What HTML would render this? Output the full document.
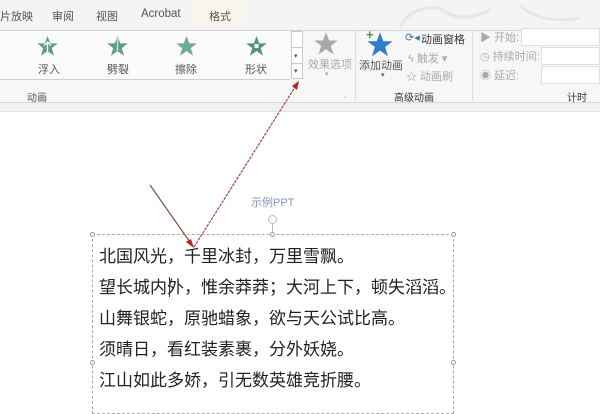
<!DOCTYPE html>
<html><head><meta charset="utf-8"><style>
*{margin:0;padding:0;box-sizing:border-box}
body{width:600px;height:400px;overflow:hidden;background:#fff;font-family:"Liberation Sans","Noto Sans CJK SC",sans-serif;position:relative;color:#444}
.a{position:absolute;white-space:nowrap}
.s{font-size:11px;color:#555}
.g{color:#aaa}
.t{font-size:17px;color:#222;letter-spacing:0}
</style></head><body>
<!-- tab bar -->
<div class="a" style="left:0;top:0;width:600px;height:30px;background:#f4f4f4"></div>
<div class="a" style="left:195px;top:0;width:50px;height:26px;background:#faf5ea"></div>
<svg class="a" style="left:380px;top:0" width="220" height="30"><path d="M20 28 Q30 5 60 8 Q80 25 110 10 M140 5 Q160 25 200 18" stroke="#e6e6e6" stroke-width="3" fill="none"/></svg>
<div class="a s" style="left:0;top:8px">片放映</div>
<div class="a s" style="left:52px;top:8px">审阅</div>
<div class="a s" style="left:96px;top:8px">视图</div>
<div class="a s" style="left:141px;top:8px;font-size:11.5px">Acrobat</div>
<div class="a s" style="left:209px;top:8px">格式</div>
<!-- ribbon -->
<div class="a" style="left:0;top:30px;width:600px;height:73px;background:#f7f7f7;border-top:1px solid #d4d4d4;border-bottom:1px solid #d8d8d8"></div>
<div class="a" style="left:0;top:31px;width:290px;height:49px;background:#fbfbfb;border-bottom:1px solid #cfcfcf"></div>
<div class="a" style="left:0;top:103px;width:600px;height:9px;background:#f1f1f1;border-bottom:1px solid #e4e4e4"></div>
<svg width="0" height="0" style="position:absolute"><defs><symbol id="st" viewBox="0 0 20 20"><polygon points="10,1 12.4,7.3 19,7.3 13.7,11.4 15.7,18 10,14 4.3,18 6.3,11.4 1,7.3 7.6,7.3"/></symbol></defs></svg>
<svg class="a" style="left:36px;top:35px;fill:#5a9e8c" width="23" height="23"><use href="#st"/><path d="M11.5 7 L11.5 17 M8 10.5 L11.5 7 L15 10.5" stroke="#fff" stroke-width="1.4" fill="none"/></svg>
<svg class="a" style="left:106px;top:35px;fill:#5a9e8c" width="23" height="23"><use href="#st"/><path d="M11.5 1 L11.5 16" stroke="#c8e0d8" stroke-width="1.5"/></svg>
<svg class="a" style="left:175px;top:35px;fill:#6aac98" width="23" height="23"><use href="#st"/></svg>
<svg class="a" style="left:245px;top:35px;fill:#4f9583" width="23" height="23"><use href="#st"/><rect x="9.5" y="9" width="4" height="4" fill="#fff"/></svg>
<div class="a s" style="left:38px;top:61px">浮入</div>
<div class="a s" style="left:107px;top:61px">劈裂</div>
<div class="a s" style="left:175px;top:61px">擦除</div>
<div class="a s" style="left:245px;top:61px">形状</div>
<div class="a" style="left:291px;top:31px;width:12px;height:48px;border:1px solid #ccc;background:#fff"></div>
<div class="a" style="left:291px;top:47px;width:12px;height:1px;background:#ccc"></div>
<div class="a" style="left:291px;top:63px;width:12px;height:1px;background:#ccc"></div>
<div class="a" style="left:294px;top:52px;font-size:7px;color:#555">▾</div>
<div class="a" style="left:294px;top:67px;font-size:7px;color:#555">▾</div>
<div class="a s" style="left:27px;top:89px;font-size:10px">动画</div>
<svg class="a" style="left:313px;top:31px;fill:#a8a8a8" width="26" height="26"><use href="#st"/></svg>
<div class="a s g" style="left:308px;top:56px">效果选项</div>
<div class="a g" style="left:325px;top:70px;font-size:7px">▾</div>
<div class="a" style="left:355px;top:31px;width:1px;height:70px;background:#ddd"></div>
<svg class="a" style="left:366px;top:31px;fill:#2f7fce" width="28" height="28"><use href="#st"/></svg>
<div class="a" style="left:366px;top:27px;color:#4a9a4a;font-weight:bold;font-size:13px">+</div>
<div class="a s" style="left:359px;top:57px">添加动画</div>
<div class="a" style="left:381px;top:71px;font-size:7px;color:#555">▾</div>
<div class="a s" style="left:405px;top:31px;color:#3a7a9a">⟳◂</div>
<div class="a s" style="left:421px;top:31px;color:#333">动画窗格</div>
<div class="a s g" style="left:408px;top:50px">ϟ 触发 ▾</div>
<div class="a s g" style="left:406px;top:68px">☆ 动画刷</div>
<div class="a s" style="left:394px;top:89px;font-size:10px;color:#333">高级动画</div>
<div class="a" style="left:472px;top:31px;width:1px;height:70px;background:#ddd"></div>
<div class="a s g" style="left:480px;top:29px">▶ 开始:</div>
<div class="a s g" style="left:480px;top:48px">◷ 持续时间:</div>
<div class="a s g" style="left:480px;top:67px">◉ 延迟:</div>
<div class="a" style="left:521px;top:28px;width:79px;height:18px;background:#fff;border:1px solid #e0e0e0"></div>
<div class="a" style="left:541px;top:47px;width:59px;height:18px;background:#fff;border:1px solid #e0e0e0"></div>
<div class="a" style="left:541px;top:66px;width:59px;height:18px;background:#fff;border:1px solid #e0e0e0"></div>
<div class="a s" style="left:567px;top:89px;font-size:10px;color:#333">计时</div>
<div class="a" style="left:343px;top:92px;font-size:6px;color:#999">⌟</div>
<!-- slide -->
<div class="a" style="left:251px;top:194px;font-size:11px;color:#7f95b3">示例PPT</div>
<div class="a" style="left:92px;top:234px;width:362px;height:180px;border:1px dashed #aaa"></div>
<div class="a" style="left:268px;top:215px;width:9px;height:9px;border:1.5px solid #bbb;border-radius:50%"></div>
<div class="a" style="left:272px;top:224px;width:1px;height:8px;background:#bbb"></div>
<div class="a" style="left:90px;top:232px;width:5px;height:5px;border:1px solid #999;border-radius:50%;background:#fff"></div>
<div class="a" style="left:270px;top:232px;width:5px;height:5px;border:1px solid #999;border-radius:50%;background:#fff"></div>
<div class="a" style="left:451px;top:232px;width:5px;height:5px;border:1px solid #999;border-radius:50%;background:#fff"></div>
<div class="a" style="left:90px;top:360px;width:5px;height:5px;border:1px solid #999;border-radius:50%;background:#fff"></div>
<div class="a" style="left:451px;top:360px;width:5px;height:5px;border:1px solid #999;border-radius:50%;background:#fff"></div>
<div class="a t" style="left:99px;top:242px">北国风光，千里冰封，万里雪飘。</div>
<div class="a t" style="left:99px;top:273px">望长城内外，惟余莽莽；大河上下，顿失滔滔。</div>
<div class="a t" style="left:99px;top:304px">山舞银蛇，原驰蜡象，欲与天公试比高。</div>
<div class="a t" style="left:99px;top:335px">须晴日，看红装素裹，分外妖娆。</div>
<div class="a t" style="left:99px;top:366px">江山如此多娇，引无数英雄竞折腰。</div>
<div class="a" style="left:169px;top:277px;width:1px;height:20px;background:#333"></div>
<svg class="a" style="left:0;top:0" width="600" height="400">
<path d="M150 185 L192 245" stroke="#8a4a44" stroke-width="1.2"/>
<path d="M194 247 L297 84" stroke="#9a4a44" stroke-width="1.2" stroke-dasharray="3 1"/>
<polygon points="194,248 186,242 191,239" fill="#c02020"/>
<polygon points="299,81 292,86 297,90" fill="#c02020"/>
</svg>
</body></html>
